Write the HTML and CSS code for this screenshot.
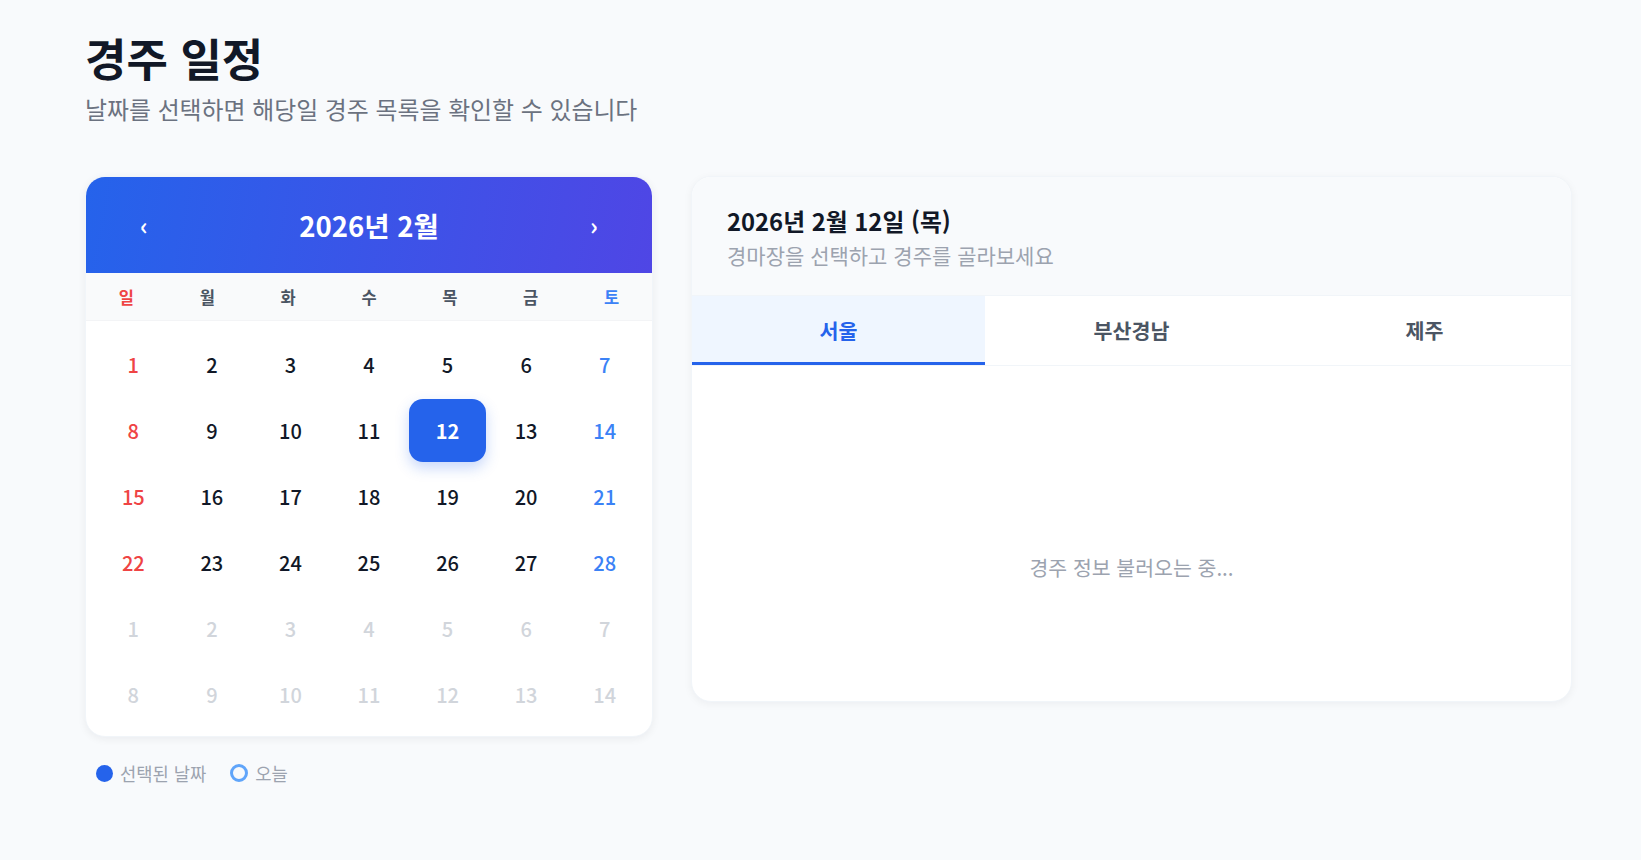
FILE: index.html
```html
<!DOCTYPE html>
<html lang="ko">
<head>
<meta charset="utf-8">
<title>경주 일정</title>
<link rel="stylesheet" href="styles.css">
</head>
<body>
<div class="page">
  <header class="page-head">
    <h1 class="page-title">경주 일정</h1>
    <p class="page-sub">날짜를 선택하면 해당일 경주 목록을 확인할 수 있습니다</p>
  </header>
  <div class="layout">
    <section class="cal-col">
      <div class="calendar">
        <div class="cal-head">
          <button class="nav-btn">‹</button>
          <div class="cal-title">2026년 2월</div>
          <button class="nav-btn">›</button>
        </div>
        <div class="weekdays">
          <div class="wd sun">일</div>
          <div class="wd">월</div>
          <div class="wd">화</div>
          <div class="wd">수</div>
          <div class="wd">목</div>
          <div class="wd">금</div>
          <div class="wd sat">토</div>
        </div>
        <div class="days">
          <div class="day sun">1</div><div class="day">2</div><div class="day">3</div><div class="day">4</div><div class="day">5</div><div class="day">6</div><div class="day sat">7</div>
          <div class="day sun">8</div><div class="day">9</div><div class="day">10</div><div class="day">11</div><div class="day selected">12</div><div class="day">13</div><div class="day sat">14</div>
          <div class="day sun">15</div><div class="day">16</div><div class="day">17</div><div class="day">18</div><div class="day">19</div><div class="day">20</div><div class="day sat">21</div>
          <div class="day sun">22</div><div class="day">23</div><div class="day">24</div><div class="day">25</div><div class="day">26</div><div class="day">27</div><div class="day sat">28</div>
          <div class="day other">1</div><div class="day other">2</div><div class="day other">3</div><div class="day other">4</div><div class="day other">5</div><div class="day other">6</div><div class="day other">7</div>
          <div class="day other">8</div><div class="day other">9</div><div class="day other">10</div><div class="day other">11</div><div class="day other">12</div><div class="day other">13</div><div class="day other">14</div>
        </div>
      </div>
      <div class="legend">
        <div class="legend-item"><span class="dot dot-fill"></span>선택된 날짜</div>
        <div class="legend-item"><span class="dot dot-ring"></span>오늘</div>
      </div>
    </section>
    <section class="panel">
      <div class="panel-head">
        <div class="panel-title">2026년 2월 12일 (목)</div>
        <div class="panel-sub">경마장을 선택하고 경주를 골라보세요</div>
      </div>
      <div class="tabs">
        <div class="tab active">서울</div>
        <div class="tab">부산경남</div>
        <div class="tab">제주</div>
      </div>
      <div class="panel-body">
        <div class="loading">경주 정보 불러오는 중...</div>
      </div>
    </section>
  </div>
</div>
</body>
</html>
```

FILE: styles.css
```css
* { box-sizing: border-box; }
html, body { margin: 0; padding: 0; }
body {
  background: #f8fafc;
  font-family: "Noto Sans CJK KR", "Noto Sans", sans-serif;
  color: #111827;
}
.page {
  width: 1487px;
  margin-left: 85px;
  padding-top: 28px;
}
.page-head { margin-bottom: 50px; }
.page-title {
  margin: 0;
  font-size: 45px;
  line-height: 60px;
  font-weight: 700;
  color: #111827;
}
.page-sub {
  margin: 4px 0 0;
  font-size: 23.9px;
  line-height: 34px;
  color: #6b7280;
}
.layout {
  display: flex;
  gap: 38px;
  align-items: flex-start;
}
.cal-col { width: 568px; flex: none; }
.calendar {
  background: #fff;
  border-radius: 20px;
  overflow: hidden;
  box-shadow: 0 2px 8px rgba(15, 23, 42, 0.06);
  border: 1px solid #f1f5f9;
}
.cal-head {
  height: 96px;
  background: linear-gradient(100deg, #2563eb 0%, #4f46e5 100%);
  display: flex;
  align-items: center;
  justify-content: space-between;
  padding: 0 38px;
}
.nav-btn {
  width: 40px;
  height: 40px;
  border: none;
  background: transparent;
  color: #fff;
  font-family: inherit;
  font-size: 24px;
  font-weight: 700;
  line-height: 40px;
  padding: 0;
}
.cal-title {
  color: #fff;
  font-size: 27.5px;
  font-weight: 700;
}
.weekdays {
  display: grid;
  grid-template-columns: repeat(7, 1fr);
  height: 48px;
  align-items: center;
  background: #f9fafb;
  border-bottom: 1px solid #f3f4f6;
}
.wd {
  text-align: center;
  font-size: 16.5px;
  font-weight: 700;
  color: #4b5563;
}
.wd.sun { color: #ef4444; }
.wd.sat { color: #3b82f6; }
.days {
  display: grid;
  grid-template-columns: repeat(7, 1fr);
  grid-auto-rows: 63px;
  column-gap: 2px;
  row-gap: 3px;
  padding: 12px 9px 10px;
}
.day {
  display: flex;
  align-items: center;
  justify-content: center;
  font-size: 20px;
  font-weight: 500;
  color: #111827;
  border-radius: 14px;
}
.day.sun { color: #ef4444; }
.day.sat { color: #3b82f6; }
.day.other { color: #d1d5db; }
.day.selected {
  background: #2563eb;
  color: #fff;
  font-weight: 700;
  box-shadow: 0 6px 14px rgba(37, 99, 235, 0.25);
}
.legend {
  display: flex;
  gap: 24px;
  margin-top: 24px;
  padding-left: 11px;
}
.legend-item {
  display: flex;
  align-items: center;
  gap: 7px;
  font-size: 17.7px;
  line-height: 24px;
  color: #9ca3af;
}
.dot {
  width: 17px;
  height: 17px;
  border-radius: 50%;
  display: inline-block;
}
.dot-fill { background: #2563eb; }
.dot-ring { border: 3px solid #60a5fa; width: 18px; height: 18px; }
.panel {
  flex: 1;
  background: #fff;
  border-radius: 20px;
  overflow: hidden;
  border: 1px solid #f1f5f9;
  box-shadow: 0 2px 8px rgba(15, 23, 42, 0.05);
}
.panel-head {
  background: #f8fafc;
  padding: 27px 35px 25px;
  border-bottom: 1px solid #f1f5f9;
}
.panel-title {
  font-size: 23.8px;
  line-height: 34px;
  font-weight: 700;
  color: #111827;
}
.panel-sub {
  font-size: 21px;
  line-height: 30px;
  color: #9ca3af;
  margin-top: 2px;
}
.tabs {
  display: flex;
  border-bottom: 1px solid #f1f5f9;
}
.tab {
  flex: 1;
  height: 69px;
  display: flex;
  align-items: center;
  justify-content: center;
  padding-top: 2px;
  font-size: 20.6px;
  font-weight: 700;
  color: #4b5563;
  border-bottom: 3px solid transparent;
}
.tab.active {
  background: #eff6ff;
  color: #2563eb;
  border-bottom-color: #2563eb;
}
.panel-body {
  padding: 187px 24px 120px;
}
.loading {
  text-align: center;
  font-size: 20.5px;
  line-height: 28px;
  color: #9ca3af;
}
```
